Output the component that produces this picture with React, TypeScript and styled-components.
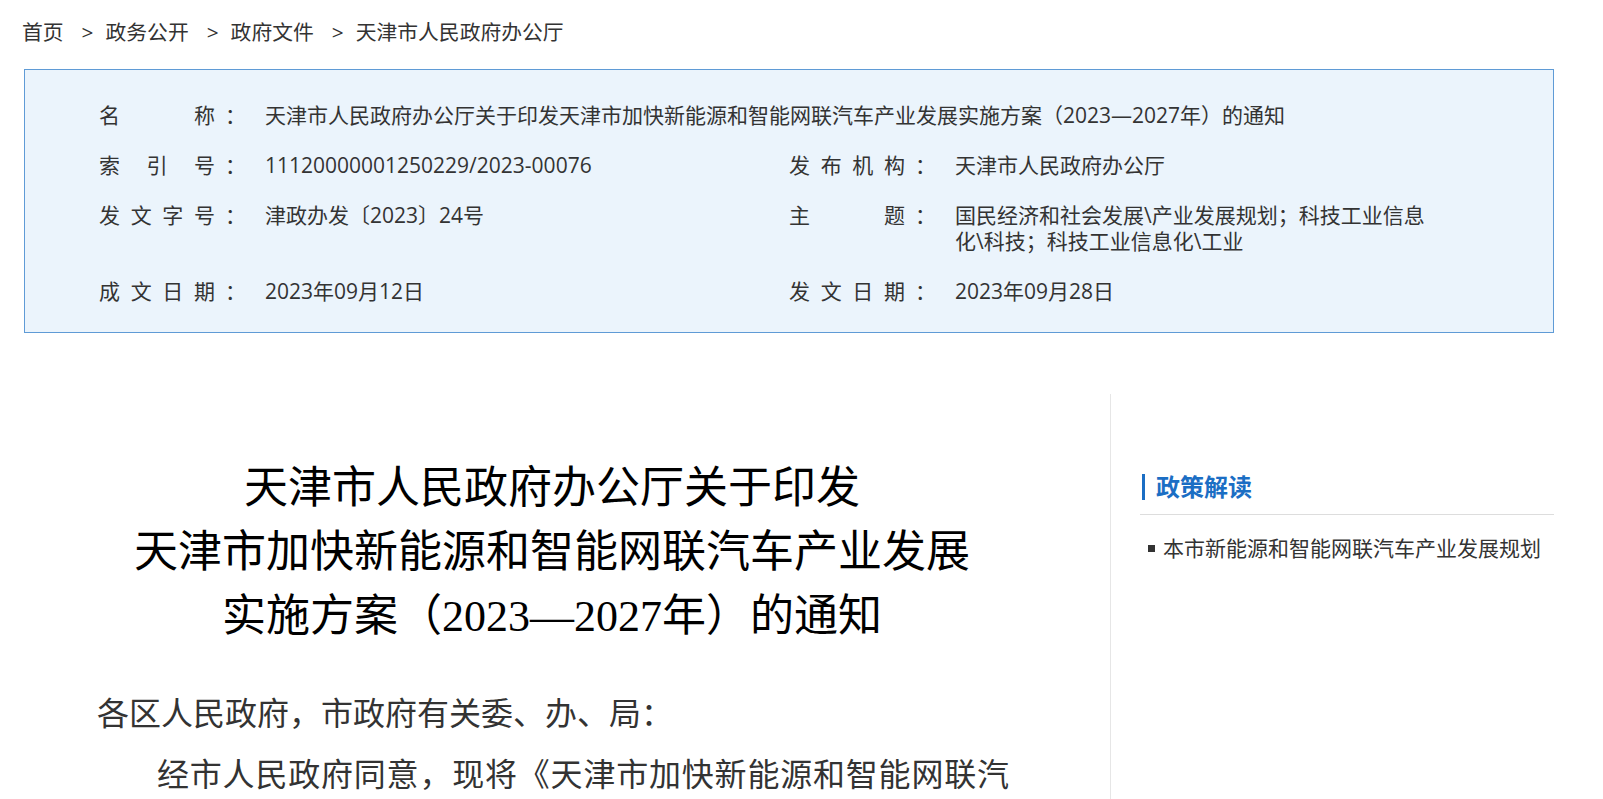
import React from "react";
import styled, { createGlobalStyle } from "styled-components";

const GlobalStyle = createGlobalStyle`
  html, body { margin: 0; padding: 0; background: #ffffff; }
  body {
    font-family: "Open Sans", "Noto Sans CJK SC", sans-serif;
    color: #333333;
  }
  * { box-sizing: border-box; }
`;

const Page = styled.div`
  width: 1530px;
  margin-left: 24px;
`;

const Breadcrumb = styled.nav`
  height: 69px;
  padding-top: 18px;
  margin-left: -2px;
  display: flex;
  align-items: flex-start;
  font-size: 20.8px;
  line-height: 28px;
  color: #333333;
`;

const Crumb = styled.span`
  white-space: nowrap;
`;

const Sep = styled.span`
  margin: 0 12px 0 18px;
`;

const InfoBox = styled.section`
  border: 1px solid #5f9bd6;
  background: #ebf4fc;
  padding: 32px 74px 28px;
  display: grid;
  grid-template-columns: 690px 1fr;
  row-gap: 24px;
  font-size: 21px;
  line-height: 26px;
`;

const Field = styled.div<{ $wide?: boolean }>`
  display: flex;
  align-items: flex-start;
  grid-column: ${(p) => (p.$wide ? "1 / span 2" : "auto")};
`;

const Label = styled.div`
  width: 166px;
  flex: none;
  display: flex;
`;

const LabelChars = styled.span`
  width: 116px;
  display: flex;
  justify-content: space-between;
`;

const Colon = styled.span`
  margin-left: 10px;
`;

const Value = styled.div<{ $max?: number }>`
  flex: 1;
  max-width: ${(p) => (p.$max ? `${p.$max}px` : "none")};
`;

const Content = styled.div`
  display: flex;
  margin-top: 61px;
  align-items: stretch;
`;

const Main = styled.main`
  width: 1056px;
  flex: none;
  padding-top: 63px;
`;

const Title = styled.h1`
  margin: 0;
  font-family: "Liberation Serif", "Noto Sans CJK SC", serif;
  font-weight: normal;
  font-size: 44px;
  line-height: 64px;
  color: #000000;
  text-align: center;
`;

const Body = styled.div`
  margin-top: 33px;
  padding: 0 71px 0 73px;
  font-size: 32px;
  line-height: 61px;
  color: #333333;
  text-align: justify;
`;

const Para = styled.p<{ $indent?: boolean }>`
  margin: 0;
  text-indent: ${(p) => (p.$indent ? "60px" : "0")};
`;

const Sidebar = styled.aside`
  width: 444px;
  margin-left: 30px;
  border-left: 1px solid #e6e6e6;
  padding-left: 29px;
  min-height: 420px;
`;

const SideTitle = styled.h2`
  margin: 78px 0 0;
  padding: 0 0 12px 2px;
  border-bottom: 1px solid #dddddd;
  display: flex;
  align-items: center;
  font-size: 24px;
  line-height: 30px;
  font-weight: bold;
  color: #1b6ec4;
`;

const TitleBar = styled.span`
  width: 3px;
  height: 26px;
  background: #1b6ec4;
  margin-right: 11px;
  flex: none;
`;

const SideList = styled.ul`
  list-style: none;
  margin: 0;
  padding: 18px 0 0;
`;

const SideItem = styled.li`
  display: flex;
  align-items: center;
  font-size: 21px;
  line-height: 30px;
  color: #333333;
`;

const Bullet = styled.span`
  width: 7px;
  height: 7px;
  background: #333333;
  margin: 0 8px 0 8px;
  flex: none;
`;

const crumbs = ["首页", "政务公开", "政府文件", "天津市人民政府办公厅"];

type Info = { label: string; value: React.ReactNode; wide?: boolean; max?: number };

const info: Info[] = [
  {
    label: "名称",
    value: "天津市人民政府办公厅关于印发天津市加快新能源和智能网联汽车产业发展实施方案（2023—2027年）的通知",
    wide: true,
  },
  { label: "索引号", value: "11120000001250229/2023-00076" },
  { label: "发布机构", value: "天津市人民政府办公厅" },
  { label: "发文字号", value: "津政办发〔2023〕24号" },
  {
    label: "主题",
    value: "国民经济和社会发展\\产业发展规划；科技工业信息化\\科技；科技工业信息化\\工业",
    max: 480,
  },
  { label: "成文日期", value: "2023年09月12日" },
  { label: "发文日期", value: "2023年09月28日" },
];

export default function App() {
  return (
    <>
      <GlobalStyle />
      <Page>
        <Breadcrumb>
          {crumbs.map((c, i) => (
            <React.Fragment key={c}>
              {i > 0 && <Sep>&gt;</Sep>}
              <Crumb>{c}</Crumb>
            </React.Fragment>
          ))}
        </Breadcrumb>

        <InfoBox>
          {info.map((f) => (
            <Field key={f.label} $wide={f.wide}>
              <Label>
                <LabelChars>
                  {Array.from(f.label).map((ch, i) => (
                    <span key={i}>{ch}</span>
                  ))}
                </LabelChars>
                <Colon>：</Colon>
              </Label>
              <Value $max={f.max}>{f.value}</Value>
            </Field>
          ))}
        </InfoBox>

        <Content>
          <Main>
            <Title>
              天津市人民政府办公厅关于印发
              <br />
              天津市加快新能源和智能网联汽车产业发展
              <br />
              实施方案（2023—2027年）的通知
            </Title>
            <Body>
              <Para>各区人民政府，市政府有关委、办、局：</Para>
              <Para $indent>
                经市人民政府同意，现将《天津市加快新能源和智能网联汽车产业发展实施方案（2023—2027年）》印发给你们，请照此执行。
              </Para>
            </Body>
          </Main>
          <Sidebar>
            <SideTitle>
              <TitleBar />
              政策解读
            </SideTitle>
            <SideList>
              <SideItem>
                <Bullet />
                本市新能源和智能网联汽车产业发展规划
              </SideItem>
            </SideList>
          </Sidebar>
        </Content>
      </Page>
    </>
  );
}
